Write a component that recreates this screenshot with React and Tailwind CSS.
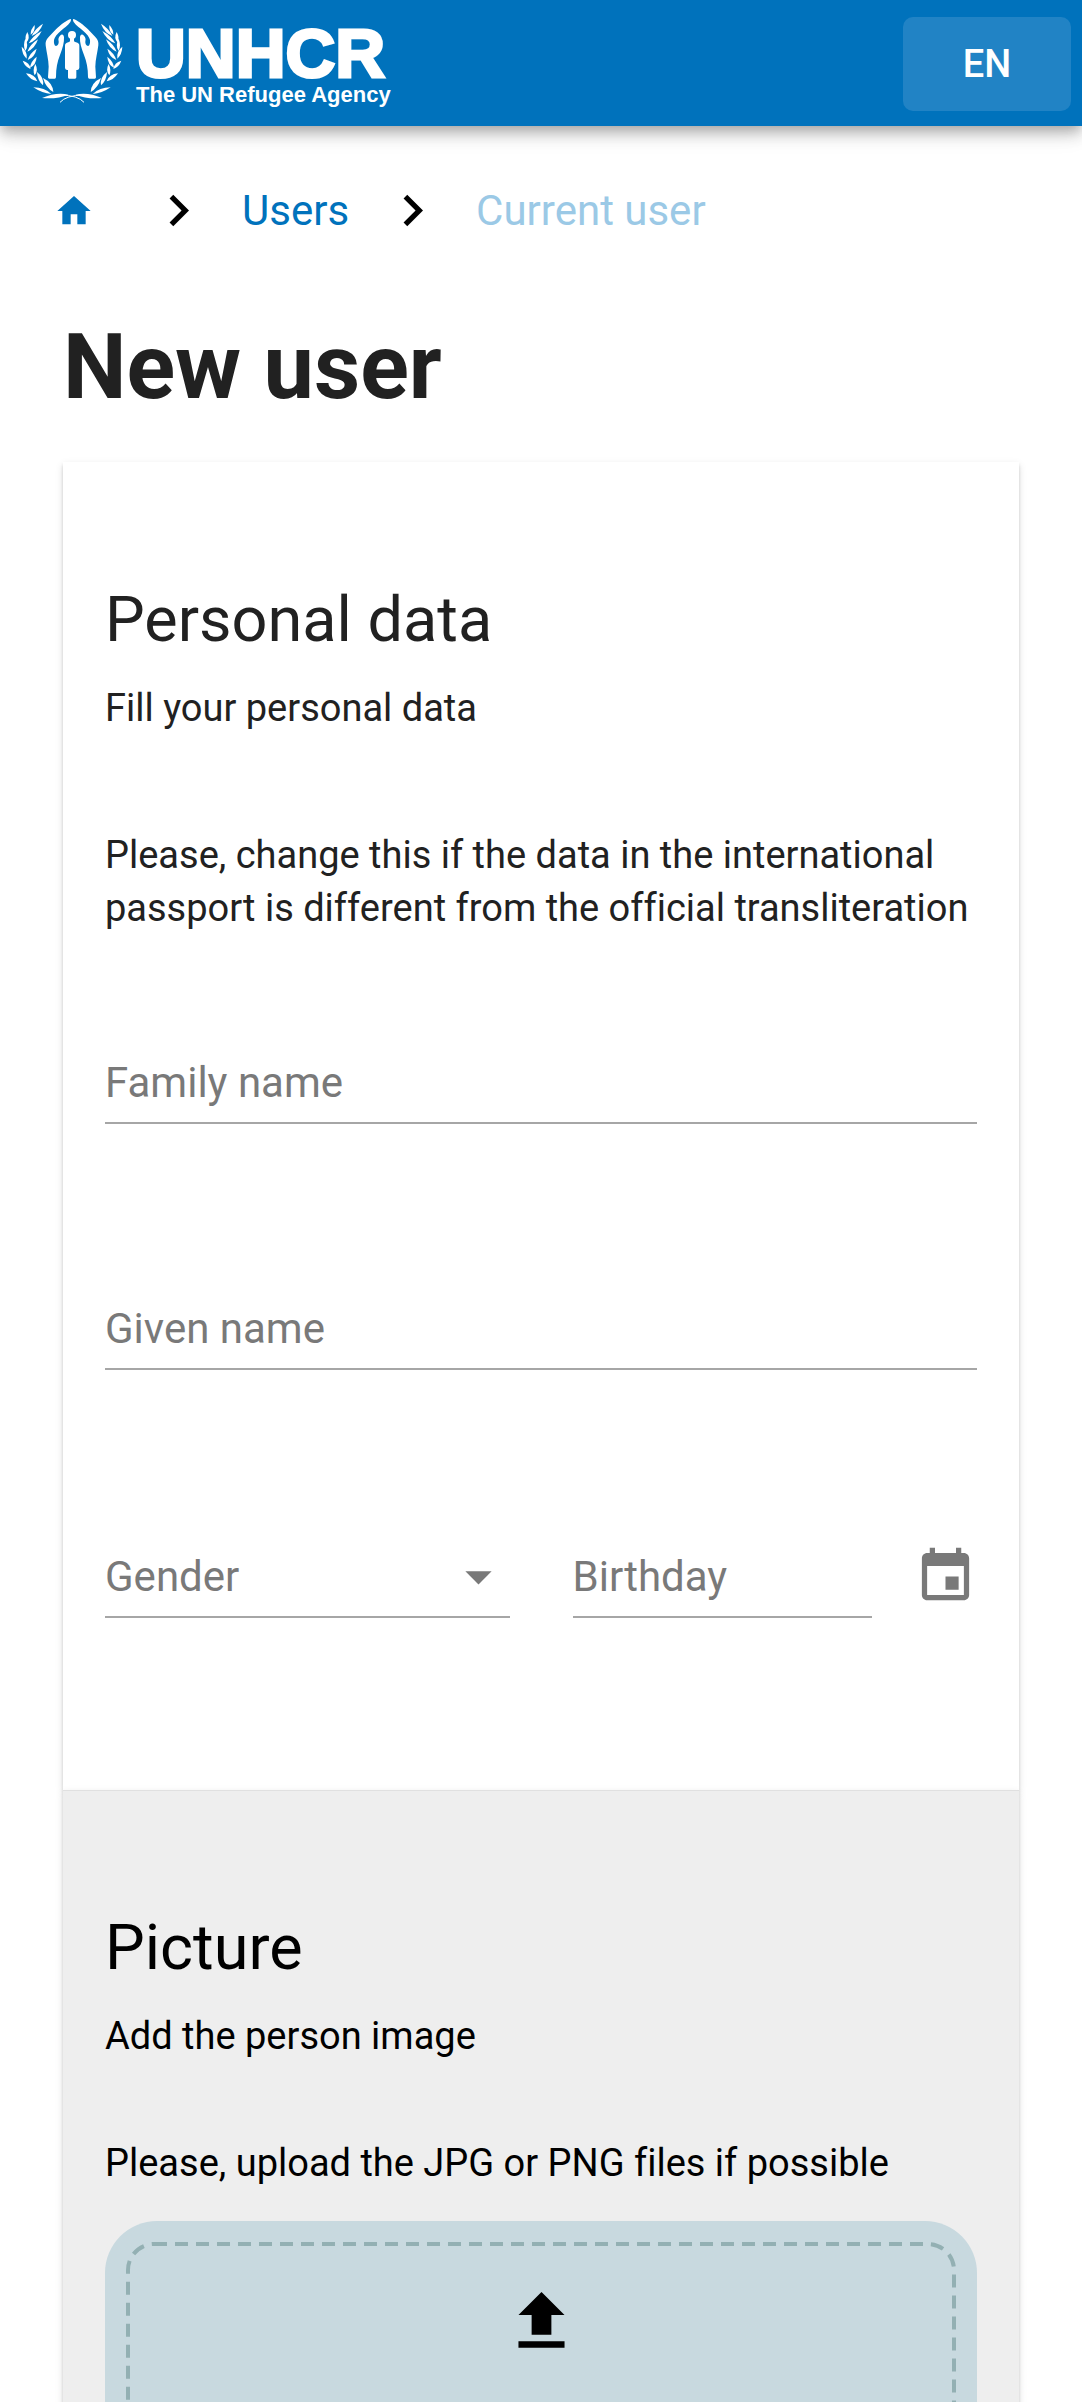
import React from "react";

// Leaves of the left laurel branch: [base x, base y, tip x, tip y, half width]
const LEAVES = [
  [95, 108, 129, 71, 6],
  [92, 104, 104, 75, 5],
  [86, 130, 125, 93, 6],
  [79, 128, 82, 96, 6],
  [82, 155, 114, 118, 6],
  [76, 153, 76, 116, 6],
  [83, 180, 110, 146, 6],
  [80, 176, 65, 140, 6],
  [90, 203, 110, 170, 6],
  [92, 207, 68, 182, 6],
  [104, 226, 106, 192, 6],
  [112, 244, 78, 220, 7],
  [129, 256, 111, 216, 7],
  [154, 282, 100, 262, 6],
  [160, 276, 129, 234, 8],
  [206, 284, 126, 294, 7],
];

function leafPath([bx, by, tx, ty, w]) {
  const dx = tx - bx;
  const dy = ty - by;
  const len = Math.hypot(dx, dy);
  const nx = (-dy / len) * w * 1.9;
  const ny = (dx / len) * w * 1.9;
  const mx = bx + dx * 0.45;
  const my = by + dy * 0.45;
  return `M${bx} ${by}Q${mx + nx} ${my + ny} ${tx} ${ty}Q${mx - nx * 0.7} ${my - ny * 0.7} ${bx} ${by}Z`;
}

function EmblemHalf() {
  return (
    <>
      {LEAVES.map((leaf, i) => (
        <path key={i} d={leafPath(leaf)} />
      ))}
      <path d="M212 57C200 60 180 76 168 88L146 111C138 119 136 126 137 136C139 155 146 180 146 200L144 232Q144 236 148 236L164 236Q168 236 168 231C168 205 172 185 180 165C188 145 193 128 192 112C191 103 186 101 180 107C176 112 174 116 176 124C177 132 173 138 168 138C163 137 161 130 162 120C163 112 172 102 182 93C192 84 204 77 211 66C213 62 214 58 212 57Z" />
      <path d="M180 307Q198 286 250 285" fill="none" stroke="currentColor" strokeWidth="3" />
    </>
  );
}

function Emblem() {
  return (
    <svg viewBox="60 54 312 258" className="h-[86px] w-[104px] shrink-0" fill="currentColor" aria-hidden="true">
      <EmblemHalf />
      <g transform="translate(432 0) scale(-1 1)">
        <EmblemHalf />
      </g>
      <circle cx="216" cy="105" r="12" />
      <path d="M210 114h12v8q0 4 6 5q10 2 10 10v66q0 6-6 7h-3v22q0 4-4 4h-18q-3 0-3-4v-22h-3q-6-1-6-7v-66q0-8 10-10q5-1 5-5z" />
    </svg>
  );
}

function Logo() {
  return (
    <a href="#home" className="mt-[18px] flex items-start text-white">
      <Emblem />
      <span className="ml-3 mt-2 flex flex-col font-['Liberation_Sans',sans-serif] font-bold">
        <span className="text-[69px] leading-[56px] [-webkit-text-stroke:3px_white]">UNHCR</span>
        <span className="text-[22px] leading-[26px]">The UN Refugee Agency</span>
      </span>
    </a>
  );
}

function Chevron() {
  return (
    <svg viewBox="0 0 24 24" className="size-[63px] shrink-0" aria-hidden="true">
      <path d="M10 6L8.59 7.41 13.17 12l-4.58 4.59L10 18l6-6z" />
    </svg>
  );
}

function TextField({ id, label, className }) {
  return (
    <div className={`relative ${className}`}>
      <input
        id={id}
        type="text"
        placeholder=" "
        className="peer block h-[73px] w-full border-b-2 border-[#a6a6a6] bg-transparent pb-2 text-[42px] text-[#212121] outline-none"
      />
      <label
        htmlFor={id}
        className="pointer-events-none absolute left-0 top-0 text-[42px] leading-[63px] text-[#797979] peer-[:not(:placeholder-shown)]:hidden"
      >
        {label}
      </label>
    </div>
  );
}

function GenderField() {
  return (
    <div className="relative min-w-0 flex-1">
      <select
        id="gender"
        required
        defaultValue=""
        className="peer block h-[73px] w-full appearance-none border-b-2 border-[#a6a6a6] bg-transparent pb-2 text-[42px] text-[#212121] outline-none"
      >
        <option value=""></option>
        <option value="female">Female</option>
        <option value="male">Male</option>
      </select>
      <label
        htmlFor="gender"
        className="pointer-events-none absolute left-0 top-0 text-[42px] leading-[63px] text-[#797979] peer-valid:hidden"
      >
        Gender
      </label>
      <svg viewBox="0 0 24 24" className="pointer-events-none absolute right-0 top-0 size-[63px]" fill="#797979" aria-hidden="true">
        <path d="M7 10l5 5 5-5z" />
      </svg>
    </div>
  );
}

export default function App() {
  return (
    <div className="flex h-screen flex-col overflow-hidden bg-white font-[Roboto,sans-serif] text-[#212121] [font-variant-ligatures:none]">
      <header className="relative flex h-[126px] shrink-0 items-start justify-between bg-[#0072bc] pl-5 pr-[11px] shadow-[0_5px_10px_-3px_rgba(0,0,0,0.2),0_10px_13px_0_rgba(0,0,0,0.14),0_3px_26px_0_rgba(0,0,0,0.12)]">
        <Logo />
        <button type="button" className="mt-[17px] h-[94px] w-[168px] rounded-[10px] bg-[#2183c5] text-[38px] font-medium text-white">
          EN
        </button>
      </header>

      <nav aria-label="Breadcrumb" className="mt-[53px] flex h-[63px] shrink-0 items-center pl-[54px] text-[42px] leading-[63px] text-[#0072bc]">
        <a href="#home" aria-label="Home" className="mr-[53px]">
          <svg viewBox="0 0 24 24" className="size-10" fill="currentColor" aria-hidden="true">
            <path d="M10 20v-6h4v6h5v-8h3L12 3 2 12h3v8z" />
          </svg>
        </a>
        <span className="text-black"><Chevron /></span>
        <a href="#users" className="mx-8">Users</a>
        <span className="text-black"><Chevron /></span>
        <span aria-current="page" className="ml-8 text-[#9bc9e6]">Current user</span>
      </nav>

      <main className="flex min-h-0 flex-1 flex-col px-[63px]">
        <h1 className="mb-[42px] mt-[73px] shrink-0 text-[90px] font-bold leading-[105px]">New user</h1>

        <form className="shrink-0">
          <section className="px-[42px] pb-[172px] pt-[116px] shadow-[0_5px_3px_-3px_rgba(0,0,0,0.2),0_3px_3px_0_rgba(0,0,0,0.14),0_3px_8px_0_rgba(0,0,0,0.12)]">
            <h2 className="text-[63px] leading-[84px]">Personal data</h2>
            <p className="mt-5 text-[38px] leading-[53px]">Fill your personal data</p>
            <p className="mt-[94px] text-[38px] leading-[53px]">
              Please, change this if the data in the international passport is different from the official transliteration
            </p>
            <TextField id="family-name" label="Family name" className="mt-[116px]" />
            <TextField id="given-name" label="Given name" className="mt-[173px]" />
            <div className="mt-[175px] flex">
              <GenderField />
              <div className="ml-[63px] flex min-w-0 flex-1 items-start">
                <TextField id="birthday" label="Birthday" className="min-w-0 flex-1" />
                <button type="button" aria-label="Pick a date" className="ml-[42px]">
                  <svg viewBox="0 0 24 24" className="size-[63px]" fill="#797979" aria-hidden="true">
                    <path d="M17 12h-5v5h5v-5zM16 1v2H8V1H6v2H5c-1.11 0-1.99.9-1.99 2L3 19c0 1.1.89 2 2 2h14c1.1 0 2-.9 2-2V5c0-1.1-.9-2-2-2h-1V1h-2zm3 18H5V8h14v11z" />
                  </svg>
                </button>
              </div>
            </div>
          </section>

          <section className="relative border-t border-[#e0e0e0] bg-[#eeeeee] px-[42px] py-[115px] text-black shadow-[0_5px_3px_-3px_rgba(0,0,0,0.2),0_3px_3px_0_rgba(0,0,0,0.14),0_3px_8px_0_rgba(0,0,0,0.12)]">
            <h2 className="text-[63px] leading-[84px]">Picture</h2>
            <p className="mt-5 text-[38px] leading-[53px]">Add the person image</p>
            <p className="mt-[74px] text-[38px] leading-[53px]">Please, upload the JPG or PNG files if possible</p>
            <button type="button" aria-label="Upload a picture" className="relative mt-[31px] flex h-[420px] w-full justify-center rounded-[52px] bg-[#c8d9df] pt-[61px]">
              <svg className="absolute left-[21px] top-[21px] h-[378px] w-[calc(100%-42px)]" aria-hidden="true">
                <rect x="2" y="2" rx="26" className="h-[calc(100%-4px)] w-[calc(100%-4px)]" fill="none" stroke="#93b0b3" strokeWidth="4" strokeDasharray="13 8" />
              </svg>
              <svg viewBox="0 0 24 24" className="size-[79px]" aria-hidden="true">
                <path d="M9 16h6v-6h4l-7-7-7 7h4zm-4 2h14v2H5z" />
              </svg>
            </button>
          </section>
        </form>
      </main>
    </div>
  );
}
